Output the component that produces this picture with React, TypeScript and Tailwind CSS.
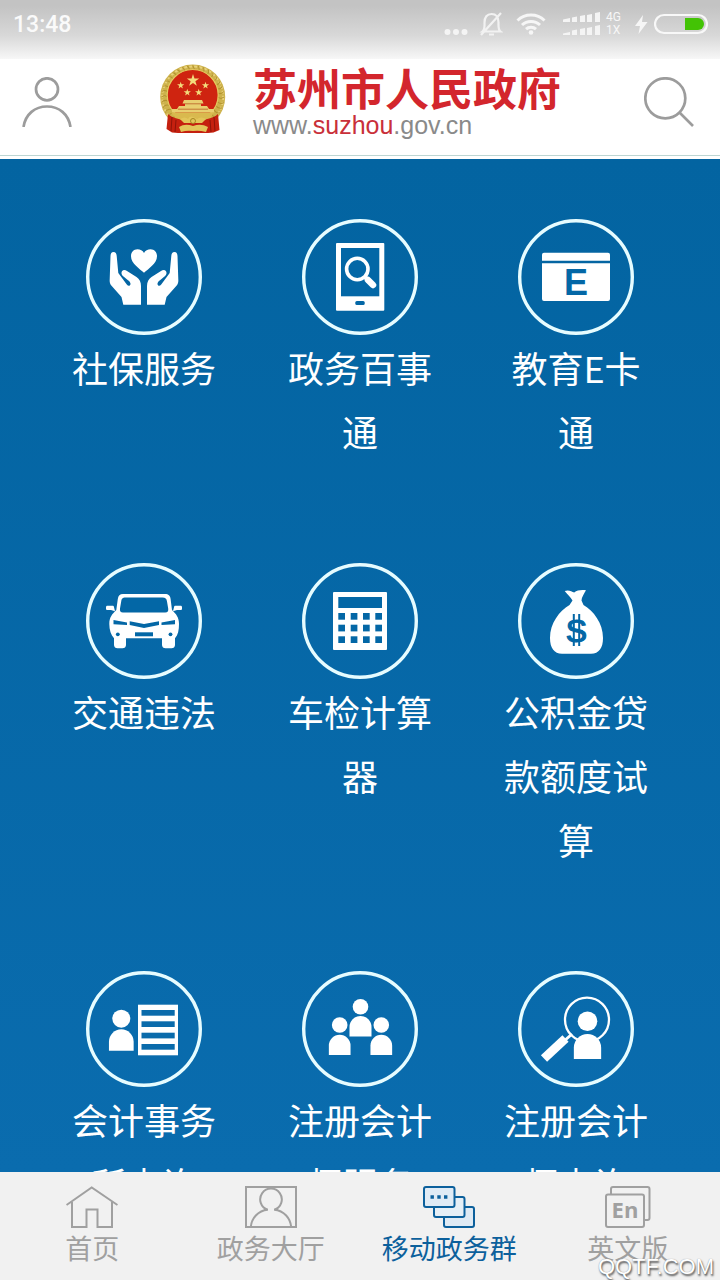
import type { ReactNode } from 'react';

const BLUE = '#0367a6';

function StatusBar() {
  return (
    <div className="flex h-[59px] shrink-0 items-start justify-between bg-linear-to-b from-[#c3c3c3] from-10% via-[#d8d8d8] via-60% to-[#f7f7f7] pt-[10px] pr-[12px] pl-[13px] text-[#fafafa]">
      <time className="font-['Roboto',sans-serif] text-[23px] leading-[30px] font-medium">13:48</time>
      <div className="flex h-[28px] items-center">
        <svg className="mr-[11px]" width="24" height="28" viewBox="0 0 24 28" fill="#f4f4f4">
          <circle cx="3.500" cy="22" r="3" />
          <circle cx="12" cy="22" r="3" />
          <circle cx="20.500" cy="22" r="3" />
        </svg>
        <svg className="mr-[13px]" width="24" height="28" viewBox="0 0 24 28" fill="none" stroke="#f2f2f2" strokeWidth="2.200">
          <path d="M3.500 21.500c2.500-2 2-5 2-9C5.500 7 8 4 12.500 4s7 3 7 8.500c0 4-.5 7 2 9zM10 24.500h5M2 25 22 3" />
        </svg>
        <svg className="mr-[17px]" width="30" height="28" viewBox="0 0 30 28" fill="none" stroke="#f6f6f6" strokeWidth="3">
          <path d="M1.500 10.500a19.500 19.500 0 0 1 27 0M6 15a13 13 0 0 1 18 0M10 19.200a7.500 7.500 0 0 1 10 0" />
          <circle cx="15" cy="22.500" r="2.300" fill="#f6f6f6" stroke="none" />
        </svg>
        <svg className="mr-[5px]" width="38" height="28" viewBox="0 0 38 28" fill="#f4f4f4">
          <path d="M0 9.500 7 8v4H0zM9 7.500l5-1V12H9zM17 6l5-1v7h-5zM24 5l5-1v8h-5zM32 3l5-1v10h-5z" />
          <path d="M0 23.500 7 22v3H0zM9 20.500l5-1V25H9zM17 19l5-1v7h-5zM24 18l5-1v8h-5zM32 16l5-1v10h-5z" />
        </svg>
        <div className="mr-[14px] font-['Roboto',sans-serif] text-[12px] leading-[13px] text-[#f7f7f7]">
          <div>4G</div>
          <div>1X</div>
        </div>
        <svg className="mr-[6px]" width="13" height="28" viewBox="0 0 13 28" fill="#f6f6f6">
          <path d="M8 5 0 16h5L3.500 24 12.500 12H7z" />
        </svg>
        <svg width="54" height="28" viewBox="0 0 54 28">
          <rect x="1" y="5" width="52" height="18" rx="9" fill="none" stroke="#f8f8f8" strokeWidth="2.200" />
          <path d="M31 8h13a6 6 0 0 1 0 12H31z" fill="#43c305" />
        </svg>
      </div>
    </div>
  );
}

function Emblem() {
  const star = 'M0-1 .225-.309H.951L.363.118.588.809 0 .382-.588.809-.363.118-.951-.309H-.225z';
  const wreath = Array.from({ length: 36 }, (_, i) => i * 10);
  return (
    <svg width="68" height="70" viewBox="0 0 68 70" className="shrink-0">
      <circle cx="33.700" cy="33" r="32.500" fill="#cdb24c" />
      <circle cx="33.700" cy="33" r="30.500" fill="none" stroke="#e9d27a" strokeWidth="2" strokeDasharray="3 2" />
      {wreath.map((a) => (
        <path key={a} d="M33.700 1.500q3 3 0 7" fill="none" stroke="#b3932f" strokeWidth="1" transform={`rotate(${a} 33.7 33)`} />
      ))}
      <circle cx="33.700" cy="31" r="25.500" fill="#cf2410" stroke="#e4c95f" strokeWidth="1.200" />
      <g fill="#f3dc7c">
        <path d={star} transform="translate(34 16.500) scale(6.500)" />
        <path d={star} transform="translate(21.700 21.500) scale(3.800)" />
        <path d={star} transform="translate(46.500 21.500) scale(3.800)" />
        <path d={star} transform="translate(28.300 28.500) scale(3.800)" />
        <path d={star} transform="translate(39.700 28.500) scale(3.800)" />
      </g>
      <path d="M25 36h18l1.500 3.500H23.500zM26 39.500h16V42H26zM20 42h28l2 3H18zM13 45h42v3.500H13z" fill="#e8cf70" />
      <path d="M19 45.200h30M26 39.800h16" stroke="#b1501b" strokeWidth=".7" />
      <path d="M12 48.500h43L50 56H18z" fill="#d9b94e" />
      <path d="M9 50c5 5 11 4 15 7h20c4-3 10-2 15-7l1.500 16-6 2.500L49 69H19l-6-.5L7.500 65z" fill="#c5200f" />
      <path d="M13 53l-1 14M17 56l-1 12M51 56l1 12M55 53l1 14" stroke="#8e1409" strokeWidth="1" />
      <path d="M21 55q5-3 8 0 2-5 9 0 4-3 9 0l-4 4H25zM20 63q6-4 14-1 8-3 15 1l-2 5q-7-2-13-1-6-1-12 1z" fill="#e2c55a" />
      <circle cx="34" cy="57" r="2.500" fill="none" stroke="#a78622" strokeWidth="1" />
    </svg>
  );
}

function Header() {
  return (
    <header className="shrink-0 bg-white pb-[3px]">
      <div className="flex h-[97px] items-center justify-between border-b border-[#bdd6d3] pr-[26px] pb-[10px] pl-[22px]">
        <button type="button" aria-label="个人中心">
          <svg width="50" height="50" viewBox="0 0 50 50" fill="none" stroke="#9c9c9c" strokeWidth="2.700">
            <circle cx="25" cy="12.300" r="11" />
            <path d="M1.500 50C3.500 37 13 29.500 25 29.500S46.500 37 48.500 50" />
          </svg>
        </button>
        <a href="#home" className="flex items-center gap-[26px] pb-[6px] pl-1">
          <Emblem />
          <span className="flex flex-col gap-[2px] pt-[6px]">
            <span className="font-['Noto_Sans_CJK_SC',sans-serif] text-[44px] leading-[44px] font-bold text-[#d3262d]">苏州市人民政府</span>
            <span className="font-['Liberation_Sans',sans-serif] text-[25px] leading-[28px] text-[#8a8a8a]">
              www.<span className="text-[#c9303a]">suzhou</span>.gov.cn
            </span>
          </span>
        </a>
        <button type="button" aria-label="搜索">
          <svg width="50" height="50" viewBox="0 0 50 50" fill="none" stroke="#9c9c9c" strokeWidth="2.700">
            <circle cx="21.300" cy="21.300" r="20" />
            <path d="M35.500 35.500 49 49" />
          </svg>
        </button>
      </div>
    </header>
  );
}

const hand =
  'M27.500 33c2 0 3 1.500 3.200 4l1.600 17 8.500 11.500c1.500 2 3.500 1.500 3.700-.5.1-1.200-.8-2.500-2.500-3.700L37.500 57.500C35.500 56 35 54 36 52.300c1-1.500 3-1.600 5-.3l9.500 6c3 2 4.500 5 4.500 9v18.700H37.300L35.500 78 25.300 66.500C24 65 23.500 63 23.700 60.500L24.500 37c.2-2.500 1-4 3-4z';

function Person({ x, y, r, w, h, gap }: { x: number; y: number; r: number; w: number; h: number; gap: number }) {
  const top = y + gap;
  const k = w / 2;
  return (
    <g>
      <circle cx={x} cy={y} r={r} />
      <path d={`M${x - k} ${top + h}V${top + k}a${k} ${k} 0 0 1 ${w} 0V${top + h}z`} />
    </g>
  );
}

const icons: Record<string, ReactNode> = {
  care: (
    <>
      <path d="M58 53.700C54 50 45 44.500 45 37.200c0-4 2.700-6.900 6.400-6.900 2.900 0 5.300 1.300 6.600 3.700 1.300-2.400 3.700-3.700 6.600-3.700 3.700 0 6.400 2.900 6.400 6.900 0 7.300-9 12.800-13 16.500z" />
      <path d={hand} />
      <path d={hand} transform="translate(116 0) scale(-1 1)" />
    </>
  ),
  phone: (
    <>
      <rect x="34" y="24" width="48.300" height="67.700" rx="1" />
      <rect x="39" y="29" width="38.300" height="48.300" fill={BLUE} />
      <rect x="53.300" y="82" width="9.400" height="4" rx="1.500" fill={BLUE} />
      <circle cx="55.300" cy="50" r="10.700" fill="none" stroke="#fff" strokeWidth="3.600" />
      <path d="m63 58 2.500 2.500" stroke="#fff" strokeWidth="4" />
      <path d="m66 61 5 5" stroke="#fff" strokeWidth="6.500" strokeLinecap="round" />
    </>
  ),
  card: (
    <>
      <path d="M26 33.700h64a2 2 0 0 1 2 2v6H24v-6a2 2 0 0 1 2-2zM24 44.300h68V80a2 2 0 0 1-2 2H26a2 2 0 0 1-2-2z" />
      <text x="58" y="75.500" textAnchor="middle" fontSize="36" fontWeight="700" fontFamily="Liberation Sans, sans-serif" fill={BLUE}>E</text>
    </>
  ),
  car: (
    <>
      <path d="M37 31h42c3.500 0 5.200 1.500 5.600 5L86 47c4 4 7 7 7 14 0 6-1 11-4 14.300V82c0 2-1.500 3.300-3.500 3.300h-6c-2 0-3.500-1.300-3.500-3.300v-6.700H40V82c0 2-1.500 3.300-3.500 3.300h-5c-2 0-3.500-1.300-3.500-3.300v-6.700C25 72 23.300 67 23.300 61c0-7 3-10 7-14l1.500-11c.5-3.500 2-5 5.200-5z" />
      <path d="M21.500 42.700h5c1 0 1.500.5 1.500 1.500l1 4-4-1.200h-3.500c-1 0-1.500-.5-1.500-1.500v-1.300c0-1 .5-1.500 1.500-1.500zM94.500 42.700h-5c-1 0-1.500.5-1.500 1.500l-1 4 4-1.200h3.500c1 0 1.500-.5 1.500-1.500v-1.300c0-1-.5-1.500-1.500-1.500z" />
      <g fill={BLUE}>
        <path d="M39.500 34.500h37c3 0 4 1 4.500 4l1.200 7c.4 2.500-.5 4-3 4H37c-2.500 0-3.400-1.500-3-4l1.200-7c.5-3 1.300-4 4.300-4z" />
        <path d="M27.500 57 41 59.500V62l-13.500-.8zM89 57l-13.500 2.500V62l13.500-.8zM43.700 58.200 58 61l15-2.800V62l-15 3-14.300-3z" />
        <circle cx="31.800" cy="71.300" r="1.900" />
        <circle cx="84.500" cy="71.300" r="1.900" />
        <path d="M49 69.300h18v4H49z" />
      </g>
    </>
  ),
  calculator: (
    <>
      <rect x="31" y="29" width="54" height="58" rx="1" />
      <rect x="36.300" y="34" width="43.700" height="11" fill={BLUE} />
      {[50, 61.700, 73.300].map((y) =>
        [36.300, 48.700, 61, 73.300].map((x) => <rect key={`${x}-${y}`} x={x} y={y} width="6.700" height="6.700" fill={BLUE} />),
      )}
    </>
  ),
  money: (
    <>
      <path d="M46.700 28c4-1.500 7 .5 9.500 1.500 3-2.500 7-2.800 11.800-2.300-1.800 3.500-4.500 7-4.500 10.300l2 4.500c10 6 19.500 18 19.500 33 0 10-4 15.700-12 15.700H44c-8 0-12-5.700-12-15.700 0-15 9.500-27 19.500-33l3-4.500c-2-3.500-5-6-7.800-9.500z" />
      <text x="58.500" y="79" textAnchor="middle" fontSize="32" fontFamily="Liberation Sans, sans-serif" fill={BLUE} stroke={BLUE} strokeWidth="1.200">S</text>
      <path d="M55.800 51v32M61.200 51v32" stroke={BLUE} strokeWidth="2" />
    </>
  ),
  list: (
    <>
      <Person x={35.300} y={47.700} r={9} w={24.700} h={21.400} gap={10.600} />
      <rect x="52" y="33.700" width="40" height="50.600" />
      {[39, 50.300, 61.700, 73].map((y) => (
        <rect key={y} x="55.500" y={y} width="33.200" height="5.700" fill="#0a6bab" />
      ))}
    </>
  ),
  team: (
    <>
      <Person x={58.500} y={35.700} r={7.800} w={22} h={20.500} gap={9.300} />
      <Person x={37.700} y={54} r={7.800} w={21.700} h={20.300} gap={9.700} />
      <Person x={79.300} y={54} r={7.800} w={21.700} h={20.300} gap={9.700} />
    </>
  ),
  inspect: (
    <>
      <circle cx="69" cy="48.700" r="22" fill="none" stroke="#fff" strokeWidth="2.300" />
      <Person x={69.500} y={50.300} r={9.800} w={27.300} h={25} gap={12.700} />
      <path d="m54 63-9 8" stroke="#fff" strokeWidth="3" />
      <path d="M47.500 67.500 26 87.500" stroke="#fff" strokeWidth="9" />
    </>
  ),
};

const services = [
  { icon: 'care', label: '社保服务' },
  { icon: 'phone', label: '政务百事通' },
  { icon: 'card', label: '教育E卡通' },
  { icon: 'car', label: '交通违法' },
  { icon: 'calculator', label: '车检计算器' },
  { icon: 'money', label: '公积金贷款额度试算' },
  { icon: 'list', label: '会计事务所查询' },
  { icon: 'team', label: '注册会计师服务' },
  { icon: 'inspect', label: '注册会计师查询' },
];

function ServiceGrid() {
  return (
    <main className="min-h-0 flex-1 overflow-y-auto bg-linear-to-b from-[#0364a1] to-[#0a6cae] [scrollbar-width:none]">
      <div className="grid grid-cols-3 gap-y-[100px] px-9 py-[60px]">
        {services.map((s) => (
          <a key={s.label} href={`#${s.icon}`} className="flex flex-col items-center text-white">
            <svg width="116" height="116" viewBox="0 0 116 116" fill="#fff">
              <circle cx="58" cy="58" r="56.300" fill="none" stroke="#e6fcff" strokeWidth="3.400" />
              {icons[s.icon]}
            </svg>
            <span className="max-w-[152px] text-center text-[36px] leading-[64px]">{s.label}</span>
          </a>
        ))}
      </div>
    </main>
  );
}

const tabs: { label: string; active?: boolean; width: number; icon: ReactNode }[] = [
  {
    label: '首页',
    width: 52,
    icon: <path d="M.5 19 25.700 1.500 51.500 19M6 16v25h14.500V23.500h11V41H46V16" />,
  },
  {
    label: '政务大厅',
    width: 52,
    icon: (
      <path d="M1 1h50v40H1zM5.800 41c.7-8.500 7-16.500 17-17.300a10.800 10.800 0 1 1 6.400 0c10 .8 16.300 8.800 17 17.300" />
    ),
  },
  {
    label: '移动政务群',
    active: true,
    width: 52,
    icon: (
      <>
        <rect x="21" y="21" width="30" height="20" rx="2" fill="#dfeaf4" />
        <rect x="11" y="11" width="30.500" height="20" rx="2" fill="#e6eff6" />
        <rect x="1" y="1" width="30.500" height="20" rx="2" fill="#e0ebf5" />
        <path d="M7.500 11h3.400M14.300 11h3.400M21 11h3.400" strokeWidth="3.400" />
      </>
    ),
  },
  {
    label: '英文版',
    width: 46,
    icon: (
      <>
        <path d="M6 8V3q0-2 2-2h34.500q2 0 2 2v29q0 2-2 2H39" />
        <rect x="1" y="8.500" width="38" height="32.500" rx="2" />
        <text x="20" y="32" textAnchor="middle" fontSize="22" fontWeight="700" fontFamily="Open Sans, sans-serif" fill="currentColor" stroke="none">En</text>
      </>
    ),
  },
];

function TabBar() {
  return (
    <nav className="relative flex h-[108px] shrink-0 bg-[#f1f1f1] px-[3px]">
      {tabs.map((t) => (
        <a
          key={t.label}
          href={`#${t.label}`}
          className={`flex flex-1 flex-col items-center pt-[14px] text-[27px] leading-[40px] ${t.active ? 'text-[#0c609c]' : 'text-[#a0a0a0]'}`}
        >
          <svg width={t.width} height="42" viewBox={`0 0 ${t.width} 42`} fill="none" stroke="currentColor" strokeWidth="2">
            {t.icon}
          </svg>
          {t.label}
        </a>
      ))}
      <span className="absolute right-[6px] bottom-0 font-['Liberation_Sans',sans-serif] text-[22px] leading-[26px] text-white [text-shadow:1px_2px_2px_#555,0_0_1px_#888]">
        QQTF.COM
      </span>
    </nav>
  );
}

export default function App() {
  return (
    <div className="flex h-screen flex-col overflow-hidden bg-white font-['Noto_Sans_CJK_SC',sans-serif]">
      <StatusBar />
      <Header />
      <ServiceGrid />
      <TabBar />
    </div>
  );
}
